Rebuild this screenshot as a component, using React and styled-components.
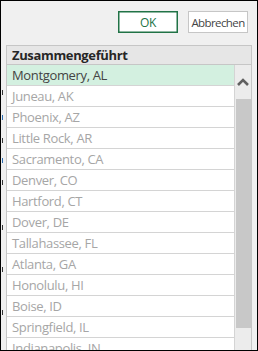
import React from "react";
import styled, { createGlobalStyle } from "styled-components";

const Global = createGlobalStyle`
  html, body { margin: 0; padding: 0; background: #f0f0f0; }
  * { box-sizing: border-box; }
`;

const Window = styled.div`
  width: 258px;
  height: 351px;
  border: 1px solid #000;
  background: #f0f0f0;
  overflow: hidden;
  display: flex;
  flex-direction: column;
  font-family: "Open Sans", "Noto Sans", sans-serif;
`;

const ButtonBar = styled.div`
  display: flex;
  justify-content: flex-end;
  gap: 10px;
  padding: 10px 9px 0 0;
`;

const Button = styled.button`
  height: 22px;
  width: ${(p) => p.$w}px;
  padding: 0;
  font-family: inherit;
  font-size: ${(p) => (p.$primary ? "12px" : "11.5px")};
  letter-spacing: ${(p) => (p.$primary ? "-0.3px" : "-0.6px")};
  white-space: nowrap;
  overflow: hidden;
  background: #fff;
  border: 1px solid ${(p) => (p.$primary ? "#217346" : "#c6c6c6")};
  color: ${(p) => (p.$primary ? "#217346" : "#444")};
  box-shadow: ${(p) => (p.$primary ? "inset 0 0 0 0.5px #217346" : "none")};
`;

const Body = styled.div`
  display: flex;
  margin-top: 12px;
  flex: 1;
  min-height: 0;
`;

const LeftStrip = styled.div`
  width: 5px;
  position: relative;
`;

const Tick = styled.span`
  position: absolute;
  left: 1px;
  width: 1px;
  height: 5px;
  background: ${(p) => p.$c};
`;

const Table = styled.div`
  width: 246px;
  display: flex;
  flex-direction: column;
`;

const Header = styled.div`
  height: 22px;
  border: 1px solid #c6c6c6;
  background: #e6e6e6;
  color: #262626;
  font-weight: 700;
  font-size: 13px;
  letter-spacing: -0.35px;
  padding-left: 5px;
  display: flex;
  align-items: center;
`;

const Content = styled.div`
  display: flex;
  flex: 1;
`;

const List = styled.div`
  width: 228px;
  border-left: 1px solid #c6c6c6;
  background: #fff;
`;

const Row = styled.div`
  height: 21px;
  border-bottom: 1px solid #d4d4d4;
  background: ${(p) => (p.$selected ? "#d3f0e0" : "#fff")};
  color: ${(p) => (p.$selected ? "#444" : "#a6a6a6")};
  font-size: 13px;
  letter-spacing: -0.35px;
  padding-left: 5px;
  display: flex;
  align-items: center;
  white-space: nowrap;
`;

const Scrollbar = styled.div`
  width: 18px;
  background: #ececec;
  border-left: 1px solid #d4d4d4;
  border-right: 1px solid #c6c6c6;
  display: flex;
  flex-direction: column;
`;

const ArrowBox = styled.div`
  height: 34px;
  display: flex;
  align-items: center;
  justify-content: center;
`;

const Thumb = styled.div`
  height: 229px;
  margin: 0 0 0 1px;
  width: 15px;
  background: #c8c8c8;
`;

const cities = [
  "Montgomery, AL",
  "Juneau, AK",
  "Phoenix, AZ",
  "Little Rock, AR",
  "Sacramento, CA",
  "Denver, CO",
  "Hartford, CT",
  "Dover, DE",
  "Tallahassee, FL",
  "Atlanta, GA",
  "Honolulu, HI",
  "Boise, ID",
  "Springfield, IL",
  "Indianapolis, IN",
];

const ticks = [
  { top: 45, c: "#333" },
  { top: 70, c: "#2b6cb0" },
  { top: 93, c: "#333" },
  { top: 113, c: "#2b6cb0" },
  { top: 135, c: "#333" },
  { top: 180, c: "#333" },
  { top: 222, c: "#333" },
  { top: 265, c: "#333" },
];

export default function App() {
  return (
    <>
      <Global />
      <Window>
        <ButtonBar>
          <Button $primary $w={60}>OK</Button>
          <Button $w={60}>Abbrechen</Button>
        </ButtonBar>
        <Body>
          <LeftStrip>
            {ticks.map((t, i) => (
              <Tick key={i} $c={t.c} style={{ top: t.top }} />
            ))}
          </LeftStrip>
          <Table>
            <Header>Zusammengeführt</Header>
            <Content>
              <List>
                {cities.map((c, i) => (
                  <Row key={c} $selected={i === 0}>
                    {c}
                  </Row>
                ))}
              </List>
              <Scrollbar>
                <ArrowBox>
                  <svg width="12" height="8" viewBox="0 0 12 8">
                    <path d="M1 7 L6 2 L11 7" fill="none" stroke="#606060" strokeWidth="2.6" />
                  </svg>
                </ArrowBox>
                <Thumb />
              </Scrollbar>
            </Content>
          </Table>
        </Body>
      </Window>
    </>
  );
}
